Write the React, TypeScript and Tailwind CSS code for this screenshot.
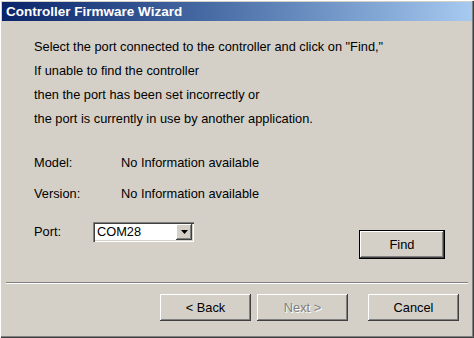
export default function App() {
    const bevelOut =
        "shadow-[inset_-1px_-1px_0_#404040,inset_1px_1px_0_#ffffff,inset_-2px_-2px_0_#808080]";

    return (
        <div
            className="w-[474px] h-[338px] bg-[#d4d0c8] p-[2px] flex flex-col text-black text-[12.8px] shadow-[inset_1px_1px_0_#ffffff,inset_-1px_-1px_0_#404040,inset_-2px_-2px_0_#808080]"
            style={{ fontFamily: '"Liberation Sans", Arial, sans-serif' }}
        >
            {/* Barre de titre */}
            <div className="h-[19px] bg-gradient-to-r from-[#0a246a] to-[#a6caf0] flex items-center pl-[4px]">
                <span className="text-white font-bold text-[13.5px] leading-none">Controller Firmware Wizard</span>
            </div>

            {/* Contenu */}
            <div className="flex-1 flex flex-col pl-[32px] pr-[27px]">
                <div className="mt-[14px] leading-[24px]">
                    <p>Select the port connected to the controller and click on "Find,"</p>
                    <p>If unable to find the controller</p>
                    <p>then the port has been set incorrectly or</p>
                    <p>the port is currently in use by another application.</p>
                </div>

                <div className="mt-[22px] flex leading-[20px]">
                    <span className="w-[87px]">Model:</span>
                    <span>No Information available</span>
                </div>
                <div className="mt-[11px] flex leading-[20px]">
                    <span className="w-[87px]">Version:</span>
                    <span>No Information available</span>
                </div>

                <div className="flex items-start">
                    <div className="mt-[18px] flex items-center">
                        <span className="w-[59px] leading-[20px]">Port:</span>
                        {/* Liste déroulante */}
                        <div className="w-[101px] h-[20px] bg-white flex items-center shadow-[inset_1px_1px_0_#808080,inset_2px_2px_0_#404040,inset_-1px_-1px_0_#ffffff,inset_-2px_-2px_0_#d4d0c8]">
                            <span className="flex-1 pl-[4px] leading-none">COM28</span>
                            <div className={`w-[16px] h-[16px] mr-[2px] bg-[#d4d0c8] flex items-center justify-center ${bevelOut}`}>
                                <svg width="7" height="4" viewBox="0 0 7 4">
                                    <path d="M0 0h7L3.5 4z" fill="#000" />
                                </svg>
                            </div>
                        </div>
                    </div>
                    <div className="ml-auto mt-[26px] w-[86px] h-[29px] border border-black">
                        <button className={`w-full h-full bg-[#d4d0c8] ${bevelOut}`}>Find</button>
                    </div>
                </div>
            </div>

            {/* Séparateur */}
            <div className="mx-[4px] border-t border-t-[#808080] border-b border-b-white" />

            {/* Boutons du bas */}
            <div className="flex pt-[10px] pb-[15px] pl-[158px]">
                <button className={`w-[91px] h-[27px] bg-[#d4d0c8] ${bevelOut}`}>&lt; Back</button>
                <button className={`ml-[6px] w-[91px] h-[27px] bg-[#d4d0c8] text-[#808080] [text-shadow:1px_1px_0_#ffffff] ${bevelOut}`}>Next &gt;</button>
                <button className={`ml-[20px] w-[91px] h-[27px] bg-[#d4d0c8] ${bevelOut}`}>Cancel</button>
            </div>
        </div>
    );
}
